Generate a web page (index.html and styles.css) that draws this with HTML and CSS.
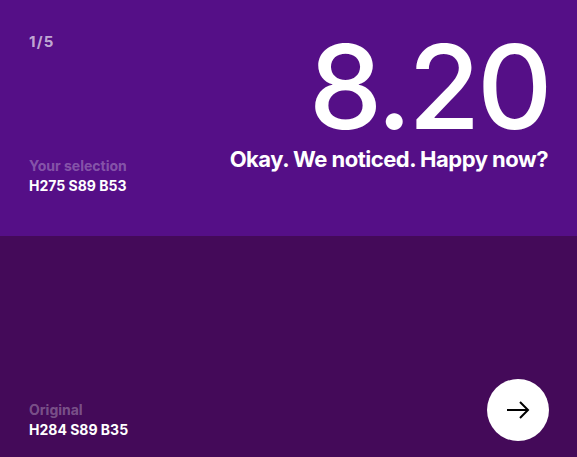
FILE: index.html
```html
<!DOCTYPE html>
<html lang="en">
<head>
<meta charset="utf-8">
<link rel="stylesheet" href="styles.css">
</head>
<body>
<div class="screen">
  <section class="panel panel-top">
    <div class="left">
      <div class="counter">1/5</div>
      <div class="swatch-label">
        <div class="muted">Your selection</div>
        <div class="value">H275 S89 B53</div>
      </div>
    </div>
    <div class="right">
      <div class="score">8.20</div>
      <div class="tagline">Okay. We noticed. Happy now?</div>
    </div>
  </section>
  <section class="panel panel-bottom">
    <div class="swatch-label">
      <div class="muted">Original</div>
      <div class="value">H284 S89 B35</div>
    </div>
    <button class="next" aria-label="Next">
      <svg width="24" height="20" viewBox="0 0 24 20" fill="none" stroke="#000" stroke-width="2" stroke-linecap="butt" stroke-linejoin="miter"><path d="M1 10h21M14 2l8 8-8 8"/></svg>
    </button>
  </section>
</div>
</body>
</html>
```
FILE: styles.css
```css
* { box-sizing: border-box; }
html, body { margin: 0; padding: 0; }
body {
  width: 577px;
  height: 457px;
  overflow: hidden;
  font-family: Inter, "Liberation Sans", sans-serif;
  color: #fff;
}
.screen { display: flex; flex-direction: column; height: 457px; }
.panel { display: flex; justify-content: space-between; }
.panel-top {
  background: #550f87;
  height: 236px;
  padding: 33px 29px 40px 29px;
}
.panel-bottom {
  background: #440a59;
  flex: 1;
  align-items: flex-end;
  padding: 0 28px 16px 29px;
}
.left { display: flex; flex-direction: column; justify-content: space-between; }
.counter {
  font-size: 15px;
  line-height: 18px;
  font-weight: 700;
  color: rgba(255,255,255,0.65);
  letter-spacing: 1.2px;
}
.swatch-label { font-size: 14px; font-weight: 700; letter-spacing: 0; line-height: 20px; }
.panel-bottom .swatch-label { margin-bottom: 1px; }
.muted { color: rgba(255,255,255,0.3); }
.right { display: flex; flex-direction: column; align-items: flex-end; }
.score {
  font-size: 117px;
  font-weight: 500;
  letter-spacing: -3.5px;
  line-height: 100px;
  margin-top: 4px;
  margin-right: -1px;
}
.tagline {
  font-size: 22px;
  font-weight: 700;
  letter-spacing: -0.5px;
  line-height: 26px;
  margin-top: 9px;
}
.next {
  width: 62px;
  height: 62px;
  border-radius: 50%;
  border: 0;
  background: #fff;
  display: flex;
  align-items: center;
  justify-content: center;
  padding: 0;
}
```
